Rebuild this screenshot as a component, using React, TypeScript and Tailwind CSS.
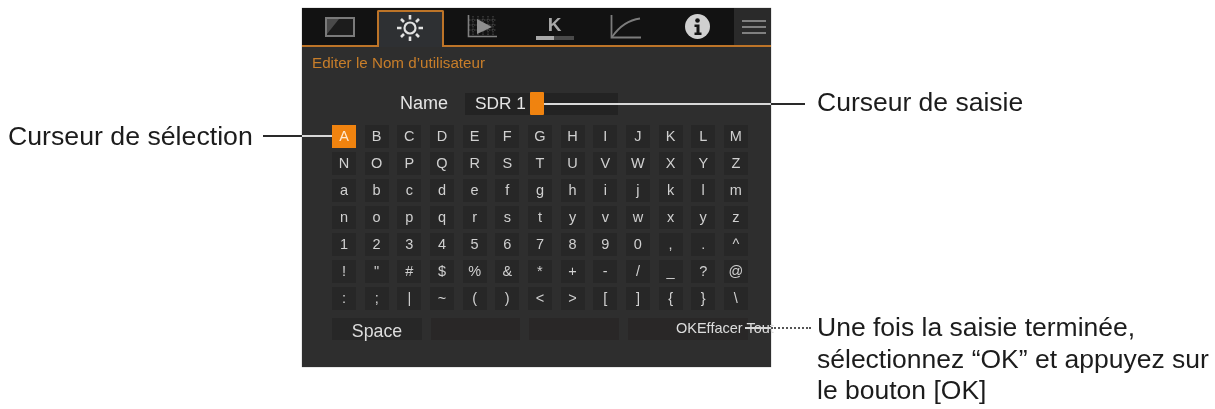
import React from 'react';

const rows = [
  ['A', 'B', 'C', 'D', 'E', 'F', 'G', 'H', 'I', 'J', 'K', 'L', 'M'],
  ['N', 'O', 'P', 'Q', 'R', 'S', 'T', 'U', 'V', 'W', 'X', 'Y', 'Z'],
  ['a', 'b', 'c', 'd', 'e', 'f', 'g', 'h', 'i', 'j', 'k', 'l', 'm'],
  ['n', 'o', 'p', 'q', 'r', 's', 't', 'y', 'v', 'w', 'x', 'y', 'z'],
  ['1', '2', '3', '4', '5', '6', '7', '8', '9', '0', ',', '.', '^'],
  ['!', '"', '#', '$', '%', '&', '*', '+', '-', '/', '_', '?', '@'],
  [':', ';', '|', '~', '(', ')', '<', '>', '[', ']', '{', '}', '\\'],
];

const ScreenIcon = () => (
  <svg width="30" height="20" viewBox="0 0 30 20">
    <rect x="1" y="1" width="28" height="18" fill="#1c1c1c" stroke="#7a7a7a" strokeWidth="2" />
    <path d="M2 17 L14 2 H2 Z" fill="#4a4a4a" />
  </svg>
);

const SunIcon = () => (
  <svg width="28" height="28" viewBox="0 0 28 28" stroke="#e2e2e2" fill="none">
    <circle cx="14" cy="14" r="5.5" strokeWidth="2.2" />
    <path d="M14 1v4.5M14 22.5v4.5M1 14h4.5M22.5 14h4.5M5 5l3 3M20 20l3 3M5 23l3-3M20 8l3-3" strokeWidth="2.6" />
  </svg>
);

const ChartIcon = () => (
  <svg width="30" height="23" viewBox="0 0 30 23">
    <path d="M6 1v20M11 1v20M16 1v20M21 1v20M26 1v20M2 5h27M2 10h27M2 15h27" stroke="#505050" strokeWidth="1" strokeDasharray="1.5 1" fill="none" />
    <path d="M1.5 0v21.5H30" stroke="#808080" strokeWidth="1.6" fill="none" />
    <path d="M10 4 L25 12 L10 19 Z" fill="#8e8e8e" />
  </svg>
);

const CurveIcon = () => (
  <svg width="31" height="24" viewBox="0 0 31 24" fill="none" stroke="#7c7c7c" strokeWidth="1.8">
    <path d="M1.5 0v22.5H31" />
    <path d="M2 22 C9 12 18 5 30 3.5" />
  </svg>
);

const InfoIcon = () => (
  <svg width="25" height="25" viewBox="0 0 25 25">
    <circle cx="12.5" cy="12.5" r="12.5" fill="#d0d0d0" />
    <circle cx="12.5" cy="6.5" r="2.3" fill="#151515" />
    <path d="M9.5 10.5h5v8h2v2.5h-7v-2.5h2v-5.5h-2z" fill="#151515" />
  </svg>
);

const App = () => {
  return (
    <div className="relative flex h-[409px] w-[1215px] overflow-hidden bg-white font-['Liberation_Sans',Arial,sans-serif] text-[#1c1c1c] blur-[0.5px]">
      <div className="w-[302px] shrink-0 whitespace-nowrap pl-[8px] pt-[122px] text-[26.7px] leading-[28px]">Curseur de sélection</div>

      <div className="mt-[8px] flex h-[359px] w-[469px] shrink-0 flex-col bg-[#2e2e2e] shadow-[0_0_1px_#777]">
        <div className="flex h-[39px] shrink-0 border-b-2 border-[#bd7428] bg-[#121212]">
          <div className="flex w-[75px] items-center justify-center">
            <ScreenIcon />
          </div>
          <div className="z-10 mt-[2px] -mb-[2px] flex w-[67px] items-center justify-center rounded-t-[2px] border-2 border-b-0 border-[#bd7428] bg-[#2e3033] pb-[4px] pr-[2px]">
            <SunIcon />
          </div>
          <div className="flex w-[75px] items-center justify-center">
            <ChartIcon />
          </div>
          <div className="flex w-[71px] flex-col items-center justify-center pt-[2px]">
            <span className="text-[19px] font-bold leading-[19px] text-[#a8a8a8]">K</span>
            <div className="mt-[2px] flex h-[4px] w-[38px]">
              <div className="w-[18px] bg-[#a8a8a8]" />
              <div className="flex-1 bg-[#4a4a4a]" />
            </div>
          </div>
          <div className="flex w-[70px] items-center justify-center">
            <CurveIcon />
          </div>
          <div className="flex w-[74px] items-center justify-center">
            <InfoIcon />
          </div>
          <div className="flex w-[37px] flex-col items-center justify-center gap-[4px] bg-[#2a2a2a] pl-[2px]">
            <div className="h-[2px] w-[24px] bg-[#808080]" />
            <div className="h-[2px] w-[24px] bg-[#808080]" />
            <div className="h-[2px] w-[24px] bg-[#808080]" />
          </div>
        </div>

        <div className="pl-[10px] pt-[8px] text-[15.2px] leading-[16px] text-[#c87e2a]">Editer le Nom d’utilisateur</div>

        <div className="mt-[21px] flex h-[23px] items-center pl-[98px]">
          <span className="w-[65px] text-[18px] text-[#e4e4e4]">Name</span>
          <div className="flex h-[22px] w-[153px] items-center bg-[#232323] pl-[10px] text-[17.3px] text-[#e4e4e4]">
            <span className="w-[55px] whitespace-nowrap">SDR 1</span>
            <div className="h-[23px] w-[14px] rounded-[1px] bg-[#f0830f]" />
          </div>
        </div>

        <div className="mt-[10px] grid w-[416px] ml-[30px] grid-cols-[repeat(13,24px)] gap-x-[8.67px] gap-y-[4px]">
          {rows.flat().map((ch, i) => (
            <div
              key={i}
              className={
                i === 0
                  ? 'flex h-[23px] items-center justify-center bg-[#f0830f] text-[14.5px] text-[#ffe9d0]'
                  : 'flex h-[23px] items-center justify-center bg-[#272727] text-[14.5px] text-[#d0d0d0]'
              }
            >
              {ch}
            </div>
          ))}
        </div>

        <div className="ml-[30px] mt-[8px] flex h-[22px] w-[416px] gap-[9px] text-[#dcdcdc]">
          <div className="flex w-[90px] items-center justify-center bg-[#272727] pt-[4px] text-[17.8px]">Space</div>
          <div className="w-[89px] bg-[#292727]" />
          <div className="w-[90px] bg-[#292727]" />
          <div className="relative w-[120px] bg-[#292727]">
            <span className="absolute left-[48px] top-0 whitespace-nowrap text-[14.5px] leading-[20px]">OKEffacer Tout</span>
          </div>
        </div>
      </div>

      <div className="ml-[46px] flex flex-col whitespace-nowrap text-[26.5px]">
        <div className="mt-[88px] leading-[28px]">Curseur de saisie</div>
        <div className="mt-[196px] leading-[31.5px]">
          Une fois la saisie terminée,
          <br />
          sélectionnez “OK” et appuyez sur
          <br />
          le bouton [OK]
        </div>
      </div>

      {/* leader lines */}
      <div className="absolute left-[263px] top-[135px] h-[2px] w-[39px] bg-[#2a2a2a]" />
      <div className="absolute left-[302px] top-[135px] h-[2px] w-[30px] bg-[#d8d8d8]" />
      <div className="absolute left-[544px] top-[103px] h-[2px] w-[227px] bg-[#d8d8d8]" />
      <div className="absolute left-[771px] top-[103px] h-[2px] w-[34px] bg-[#2a2a2a]" />
      <div className="absolute left-[745px] top-[327px] h-[2px] w-[26px] bg-[#d8d8d8]" />
      <div className="absolute left-[771px] top-[327px] h-0 w-[40px] border-t-2 border-dotted border-[#555]" />
    </div>
  );
};

export default App;
